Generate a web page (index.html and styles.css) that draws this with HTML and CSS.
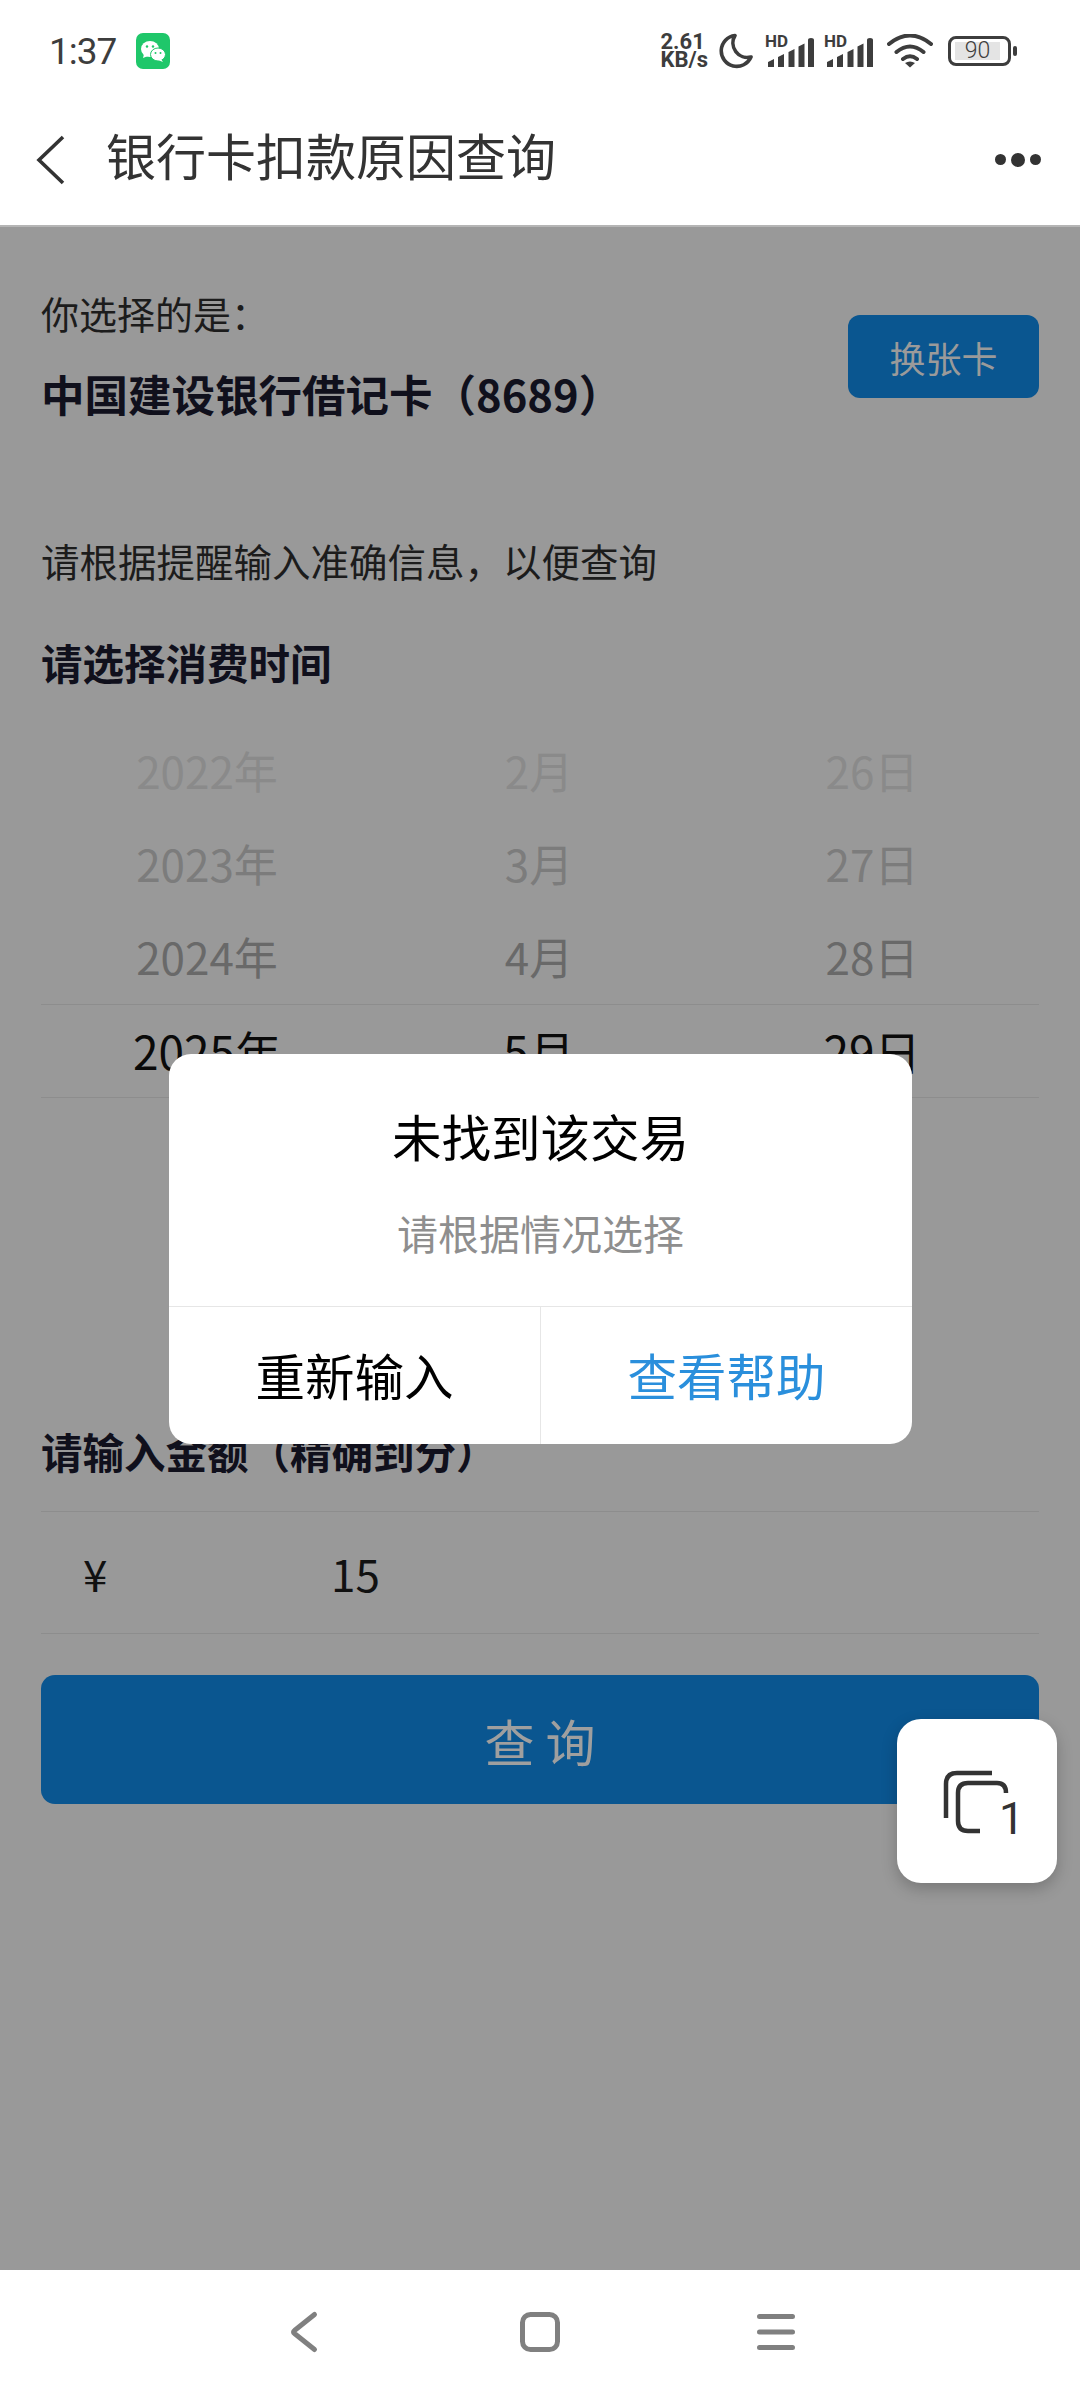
FILE: index.html
```html
<!DOCTYPE html>
<html lang="zh-CN">
<head>
    <meta charset="UTF-8">
    <meta name="viewport" content="width=device-width, initial-scale=1.0">
    <title>银行卡扣款原因查询</title>
    <link rel="stylesheet" href="styles.css">
</head>
<body>

<div class="phone">
    <div class="status-bar">
        <div class="status-left">
            <span class="clock">1:37</span>
            <svg class="wechat" width="34" height="36" viewBox="0 0 34 36">
                <rect width="34" height="36" rx="7" fill="#1fc76a"/>
                <ellipse cx="14" cy="16" rx="9" ry="8" fill="#fff"/>
                <path d="M8 21l-1 4 5-2z" fill="#fff"/>
                <ellipse cx="22" cy="21.500" rx="7.500" ry="6.500" fill="#fff" stroke="#1fc76a" stroke-width="1"/>
                <path d="M25 26l2 3-5-2z" fill="#fff"/>
                <circle cx="11" cy="13.500" r="1.200" fill="#1fc76a"/>
                <circle cx="17" cy="13.500" r="1.200" fill="#1fc76a"/>
                <circle cx="19.500" cy="20" r="1" fill="#1fc76a"/>
                <circle cx="24.500" cy="20" r="1" fill="#1fc76a"/>
            </svg>
        </div>
        <div class="status-right">
            <div class="net-speed"><span>2.61</span><span>KB/s</span></div>
            <svg class="moon" width="35" height="36" viewBox="0 0 35 36">
                <path d="M17 2.500A15.500 15.500 0 1 0 33 24 14.500 14.500 0 0 1 17 2.500z" fill="none" stroke="#3d3d3d" stroke-width="3.600" stroke-linejoin="round"/>
            </svg>
            <div class="signal">
                <span class="hd">HD</span>
                <svg width="46" height="30" viewBox="0 0 46 30">
                    <path d="M0 29v-5l6-3v8zM10 29V19l6-3v13zM20.500 29V14l6-3v18zM30.500 29V8.500l6-3V29zM40 29V2q0-2 3-2t3 2v27z" fill="#3d3d3d"/>
                </svg>
            </div>
            <div class="signal">
                <span class="hd">HD</span>
                <svg width="46" height="30" viewBox="0 0 46 30">
                    <path d="M0 29v-5l6-3v8zM10 29V19l6-3v13zM20.500 29V14l6-3v18zM30.500 29V8.500l6-3V29zM40 29V2q0-2 3-2t3 2v27z" fill="#3d3d3d"/>
                </svg>
            </div>
            <svg class="wifi" width="46" height="34" viewBox="0 0 46 34">
                <path d="M2 10Q23-7 44 10M9.500 18Q23 7 36.500 18M16 25Q23 19.500 30 25" fill="none" stroke="#3d3d3d" stroke-width="4" stroke-linecap="round"/>
                <path d="M23 33.500l-5-4.500q5-3 10 0z" fill="#3d3d3d"/>
            </svg>
            <div class="battery">
                <div class="battery-body"><span class="battery-level">90</span></div>
                <span class="battery-tip"></span>
            </div>
        </div>
    </div>

    <div class="nav-bar">
        <svg class="nav-back" width="30" height="50" viewBox="0 0 30 50">
            <path d="M27 2L3 25l24 23" fill="none" stroke="#333" stroke-width="3.600"/>
        </svg>
        <span class="nav-title">银行卡扣款原因查询</span>
        <div class="nav-more"><i></i><i class="big"></i><i></i></div>
    </div>

    <div class="content">
        <div class="card-row">
            <div>
                <p class="card-label">你选择的是：</p>
                <p class="card-name">中国建设银行借记卡（8689）</p>
            </div>
            <button class="change-btn">换张卡</button>
        </div>

        <p class="hint">请根据提醒输入准确信息，以便查询</p>
        <h2 class="section-title">请选择消费时间</h2>

        <div class="picker">
            <div class="picker-row faint"><span>2022年</span><span>2月</span><span>26日</span></div>
            <div class="picker-row soft"><span>2023年</span><span>3月</span><span>27日</span></div>
            <div class="picker-row mid"><span>2024年</span><span>4月</span><span>28日</span></div>
            <div class="picker-row active"><span>2025年</span><span>5月</span><span>29日</span></div>
        </div>

        <h2 class="section-title amount-title">请输入金额（精确到分）</h2>
        <div class="amount-row">
            <span class="yen">¥</span>
            <span class="amount">15</span>
        </div>
        <button class="query-btn">查 询</button>
    </div>

    <div class="nav-buttons">
        <svg width="40" height="46" viewBox="0 0 40 46"><path d="M30.500 5.500L10.500 21.500q-2 1.500 0 3L30.500 40.500" fill="none" stroke="#808080" stroke-width="5" stroke-linecap="round"/></svg>
        <svg width="40" height="46" viewBox="0 0 40 46"><rect x="2.500" y="5.500" width="35" height="35" rx="8" fill="none" stroke="#808080" stroke-width="5"/></svg>
        <svg width="40" height="46" viewBox="0 0 40 46"><path d="M3.500 7.500h33M3.500 23h33M3.500 38.500h33" fill="none" stroke="#808080" stroke-width="5" stroke-linecap="round"/></svg>
    </div>

    <!-- dialog and floating tab button sit over the page -->
    <div class="dialog">
        <div class="dialog-body">
            <div class="dialog-title">未找到该交易</div>
            <div class="dialog-text">请根据情况选择</div>
        </div>
        <div class="dialog-actions">
            <div class="dialog-btn">重新输入</div>
            <div class="dialog-btn primary">查看帮助</div>
        </div>
    </div>

    <div class="float-tab">
        <svg width="68" height="64" viewBox="0 0 68 64">
            <path d="M3 48V14q0-11 11-11h35" fill="none" stroke="#333" stroke-width="4.500"/>
            <path d="M37 61H25q-10 0-10-10V23q0-10 10-10h29q9 0 9 10" fill="none" stroke="#333" stroke-width="4.500"/>
        </svg>
        <span class="float-count">1</span>
    </div>
</div>

</body>
</html>
```

FILE: styles.css
```css
* {
    box-sizing: border-box;
}
html, body {
    margin: 0;
    padding: 0;
}
body {
    font-family: "Noto Sans CJK SC", "Noto Sans", sans-serif;
    background-color: #999;
}
p, h2 {
    margin: 0;
}
.phone {
    position: relative;
    width: 1080px;
    height: 2400px;
    display: flex;
    flex-direction: column;
    overflow: hidden;
    background-color: #999;
}

/* status bar */
.status-bar {
    height: 100px;
    background-color: white;
    display: flex;
    justify-content: space-between;
    align-items: center;
    padding: 2px 63px 0 49px;
    color: #3d3d3d;
}
.status-left {
    display: flex;
    align-items: center;
    gap: 20px;
}
.clock {
    font-family: Roboto, sans-serif;
    font-size: 37px;
    letter-spacing: -1px;
}
.status-right {
    display: flex;
    align-items: center;
    gap: 10px;
}
.net-speed {
    display: flex;
    flex-direction: column;
    font-family: Roboto, sans-serif;
    font-size: 22px;
    font-weight: 700;
    line-height: 18px;
}
.moon {
    margin-right: 2px;
}
.signal {
    position: relative;
    width: 49px;
    height: 34px;
    display: flex;
    align-items: flex-end;
    justify-content: flex-end;
}
.hd {
    position: absolute;
    left: 0;
    top: -1px;
    font-family: Roboto, sans-serif;
    font-size: 17px;
    font-weight: 700;
    line-height: 16px;
}
.wifi {
    margin-left: 4px;
}
.battery {
    display: flex;
    align-items: center;
    gap: 2px;
    margin-left: 5px;
}
.battery-body {
    width: 63px;
    height: 30px;
    border: 3px solid #3d3d3d;
    border-radius: 8px;
    padding: 3px 8px 3px 4px;
}
.battery-level {
    display: block;
    height: 18px;
    background-color: #e4e4e4;
    font-family: Roboto, sans-serif;
    font-size: 23px;
    font-weight: 300;
    line-height: 18px;
    text-align: center;
}
.battery-tip {
    width: 4px;
    height: 10px;
    border-radius: 2px;
    background-color: #3d3d3d;
}

/* title bar */
.nav-bar {
    height: 127px;
    background-color: white;
    border-bottom: 2px solid #b5b5b5;
    display: flex;
    align-items: center;
    padding: 0 39px 6px 36px;
    color: #333;
}
.nav-title {
    font-size: 50px;
    line-height: 60px;
    margin: 0 0 12px 40px;
    flex: 1;
}
.nav-more {
    display: flex;
    align-items: center;
    gap: 5px;
}
.nav-more i {
    display: block;
    width: 11px;
    height: 11px;
    border-radius: 50%;
    background-color: #333;
}
.nav-more i.big {
    width: 14px;
    height: 14px;
}

/* page under the mask */
.content {
    flex: 1;
    padding: 0 41px;
    color: #111;
}
.card-row {
    display: flex;
    justify-content: space-between;
    align-items: flex-start;
    height: 306px;
    padding-top: 59px;
}
.card-label {
    font-size: 38px;
    line-height: 54px;
    color: #1c1c1c;
}
.card-name {
    font-size: 43.500px;
    font-weight: 700;
    line-height: 60px;
    margin-top: 24px;
    color: #10101c;
}
.change-btn {
    width: 191px;
    height: 83px;
    margin-top: 29px;
    padding: 1px 0 0;
    border: none;
    border-radius: 12px;
    background-color: #0a5690;
    color: #9a9a9a;
    font-family: inherit;
    font-size: 36px;
}
.hint {
    font-size: 38.500px;
    line-height: 54px;
    color: #1c1c1c;
}
.section-title {
    font-size: 41.500px;
    font-weight: 700;
    line-height: 56px;
    margin-top: 47px;
    color: #10101c;
}
.picker {
    margin-top: 35px;
}
.picker-row {
    display: grid;
    grid-template-columns: 332px 332px 1fr;
    height: 93px;
    padding-bottom: 3px;
    align-items: center;
    text-align: center;
    font-size: 44px;
}
.faint { color: #8a8a8a; }
.soft { color: #7c7c7c; }
.mid { color: #696969; }
.active {
    height: 94px;
    color: #0a0a0a;
    border-top: 1px solid #8d8d8d;
    border-bottom: 1px solid #8d8d8d;
    font-size: 46px;
}
.amount-title {
    margin-top: 325px;
}
.amount-row {
    margin-top: 32px;
    height: 123px;
    border-top: 1px solid #8d8d8d;
    border-bottom: 1px solid #8d8d8d;
    display: flex;
    align-items: center;
    font-size: 44px;
    color: #111;
}
.yen {
    width: 290px;
    padding-left: 42px;
}
.query-btn {
    display: block;
    width: 100%;
    height: 129px;
    margin-top: 41px;
    padding: 0;
    border: none;
    border-radius: 14px;
    background-color: #0a5690;
    color: #9f9f9f;
    font-family: inherit;
    font-size: 50px;
}

/* android buttons */
.nav-buttons {
    height: 130px;
    padding-bottom: 6px;
    background-color: white;
    display: flex;
    justify-content: center;
    gap: 196px;
    align-items: center;
}

/* dialog */
.dialog {
    position: absolute;
    left: 169px;
    top: 1054px;
    width: 743px;
    height: 390px;
    background-color: white;
    border-radius: 22px;
    display: flex;
    flex-direction: column;
    overflow: hidden;
}
.dialog-body {
    flex: 1;
    text-align: center;
    padding-top: 50px;
}
.dialog-title {
    font-size: 49.500px;
    line-height: 64px;
    color: #000;
}
.dialog-text {
    margin-top: 37px;
    font-size: 41px;
    line-height: 54px;
    color: #8e8e8e;
}
.dialog-actions {
    height: 138px;
    display: flex;
    border-top: 1px solid #e6e6e6;
}
.dialog-btn {
    flex: 1;
    display: flex;
    align-items: center;
    justify-content: center;
    padding-bottom: 2px;
    font-size: 49.500px;
    color: #000;
}
.dialog-btn.primary {
    color: #2a8fdc;
    border-left: 1px solid #e6e6e6;
}

/* floating tab count */
.float-tab {
    position: absolute;
    left: 897px;
    top: 1719px;
    width: 160px;
    height: 164px;
    background-color: white;
    border-radius: 24px;
    box-shadow: 0 6px 16px rgba(0, 0, 0, 0.22);
    display: flex;
    align-items: center;
    justify-content: center;
    color: #333;
}
.float-tab svg {
    margin-top: 2px;
}
.float-count {
    position: absolute;
    left: 102px;
    top: 73px;
    font-family: Roboto, sans-serif;
    font-size: 45px;
    line-height: 54px;
}
```
